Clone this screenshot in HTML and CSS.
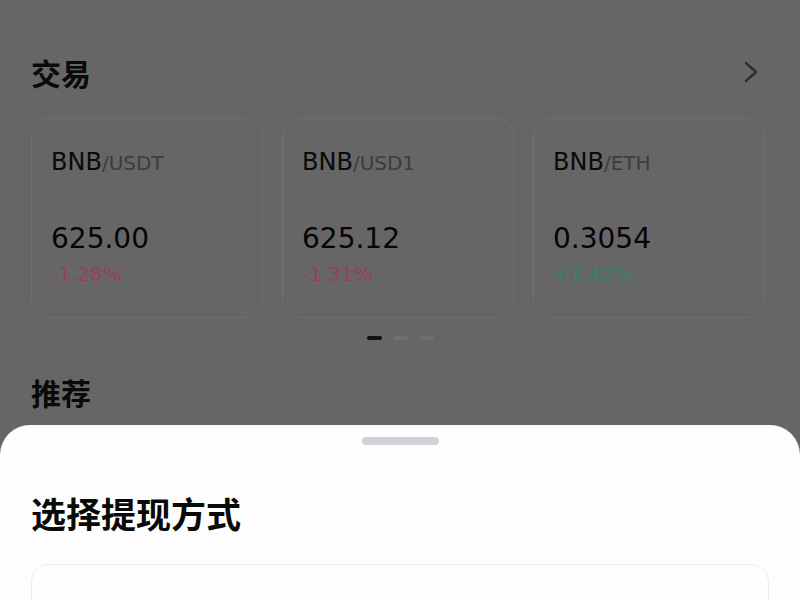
FILE: index.html
```html
<!DOCTYPE html>
<html lang="zh-CN">
<head>
    <meta charset="UTF-8">
    <meta name="viewport" content="width=device-width, initial-scale=1.0">
    <title>选择提现方式</title>
    <link rel="stylesheet" href="styles.css">
</head>
<body>
<div class="page">
    <div class="section-head">
        <h2>交易</h2>
        <svg class="chevron" width="16" height="24" viewBox="0 0 16 24">
            <path d="M3 3 L13 12 L3 21" fill="none" stroke="#2e2e2e" stroke-width="2.4" stroke-linecap="round" stroke-linejoin="round"/>
        </svg>
    </div>

    <div class="cards">
        <div class="card">
            <div class="pair">BNB<span>/USDT</span></div>
            <div class="price">625.00</div>
            <div class="change down">-1.28%</div>
        </div>
        <div class="card">
            <div class="pair">BNB<span>/USD1</span></div>
            <div class="price">625.12</div>
            <div class="change down">-1.31%</div>
        </div>
        <div class="card">
            <div class="pair">BNB<span>/ETH</span></div>
            <div class="price">0.3054</div>
            <div class="change up">+1.42%</div>
        </div>
    </div>

    <div class="dots">
        <span class="dot active"></span>
        <span class="dot"></span>
        <span class="dot"></span>
    </div>

    <div class="section-head">
        <h2>推荐</h2>
    </div>
</div>

<div class="sheet">
    <div class="handle"></div>
    <h1>选择提现方式</h1>
    <div class="option"></div>
</div>
</body>
</html>
```

FILE: styles.css
```css
body {
    margin: 0;
    background: #666666;
    font-family: "DejaVu Sans", "Noto Sans", "Noto Sans CJK SC", sans-serif;
    color: #050505;
    overflow: hidden;
    height: 600px;
}
.page {
    padding: 52px 31px 0 31px;
}
.section-head {
    display: flex;
    align-items: center;
    justify-content: space-between;
    height: 40px;
}
.section-head h2 {
    margin: 0;
    font-family: "Noto Sans CJK SC", sans-serif;
    font-size: 30px;
    font-weight: 700;
    color: #0a0a0a;
}
.chevron {
    margin-right: 10px;
}
.cards {
    display: grid;
    grid-template-columns: repeat(3, 232px);
    gap: 19px;
    margin-top: 26px;
}
.card {
    height: 200px;
    box-sizing: border-box;
    border: 1.5px solid #6f6f6f;
    border-radius: 18px;
    padding: 28px 19px 0 19px;
}
.pair {
    font-size: 24px;
    line-height: 30px;
    color: #0a0a0a;
}
.pair span {
    font-size: 20px;
    color: #3c3c3c;
}
.price {
    margin-top: 44px;
    font-size: 28px;
    line-height: 34px;
    color: #050505;
}
.change {
    font-size: 20px;
    line-height: 26px;
    margin-top: 5px;
}
.down {
    color: #98405f;
}
.up {
    color: #3a8262;
}
.dots {
    display: flex;
    justify-content: center;
    gap: 11px;
    margin-top: 18px;
    height: 4px;
}
.dot {
    width: 15px;
    height: 4px;
    border-radius: 2px;
    background: #707070;
}
.dot.active {
    background: #111;
}
.page > .section-head:last-child {
    margin-top: 32px;
}
.sheet {
    position: absolute;
    top: 425px;
    left: 0;
    right: 0;
    bottom: 0;
    background: #fefefe;
    border-radius: 30px 30px 0 0;
    padding: 12px 31px 0 31px;
}
.handle {
    width: 77px;
    height: 8px;
    border-radius: 4px;
    background: #d1d2d9;
    margin: 0 auto;
}
.sheet h1 {
    margin: 46px 0 0 0;
    font-family: "Noto Sans CJK SC", sans-serif;
    font-size: 35px;
    font-weight: 700;
    line-height: 44px;
    color: #0a0a0a;
}
.option {
    margin-top: 29px;
    height: 80px;
    border: 1.5px solid #ececef;
    border-radius: 18px;
}
```
